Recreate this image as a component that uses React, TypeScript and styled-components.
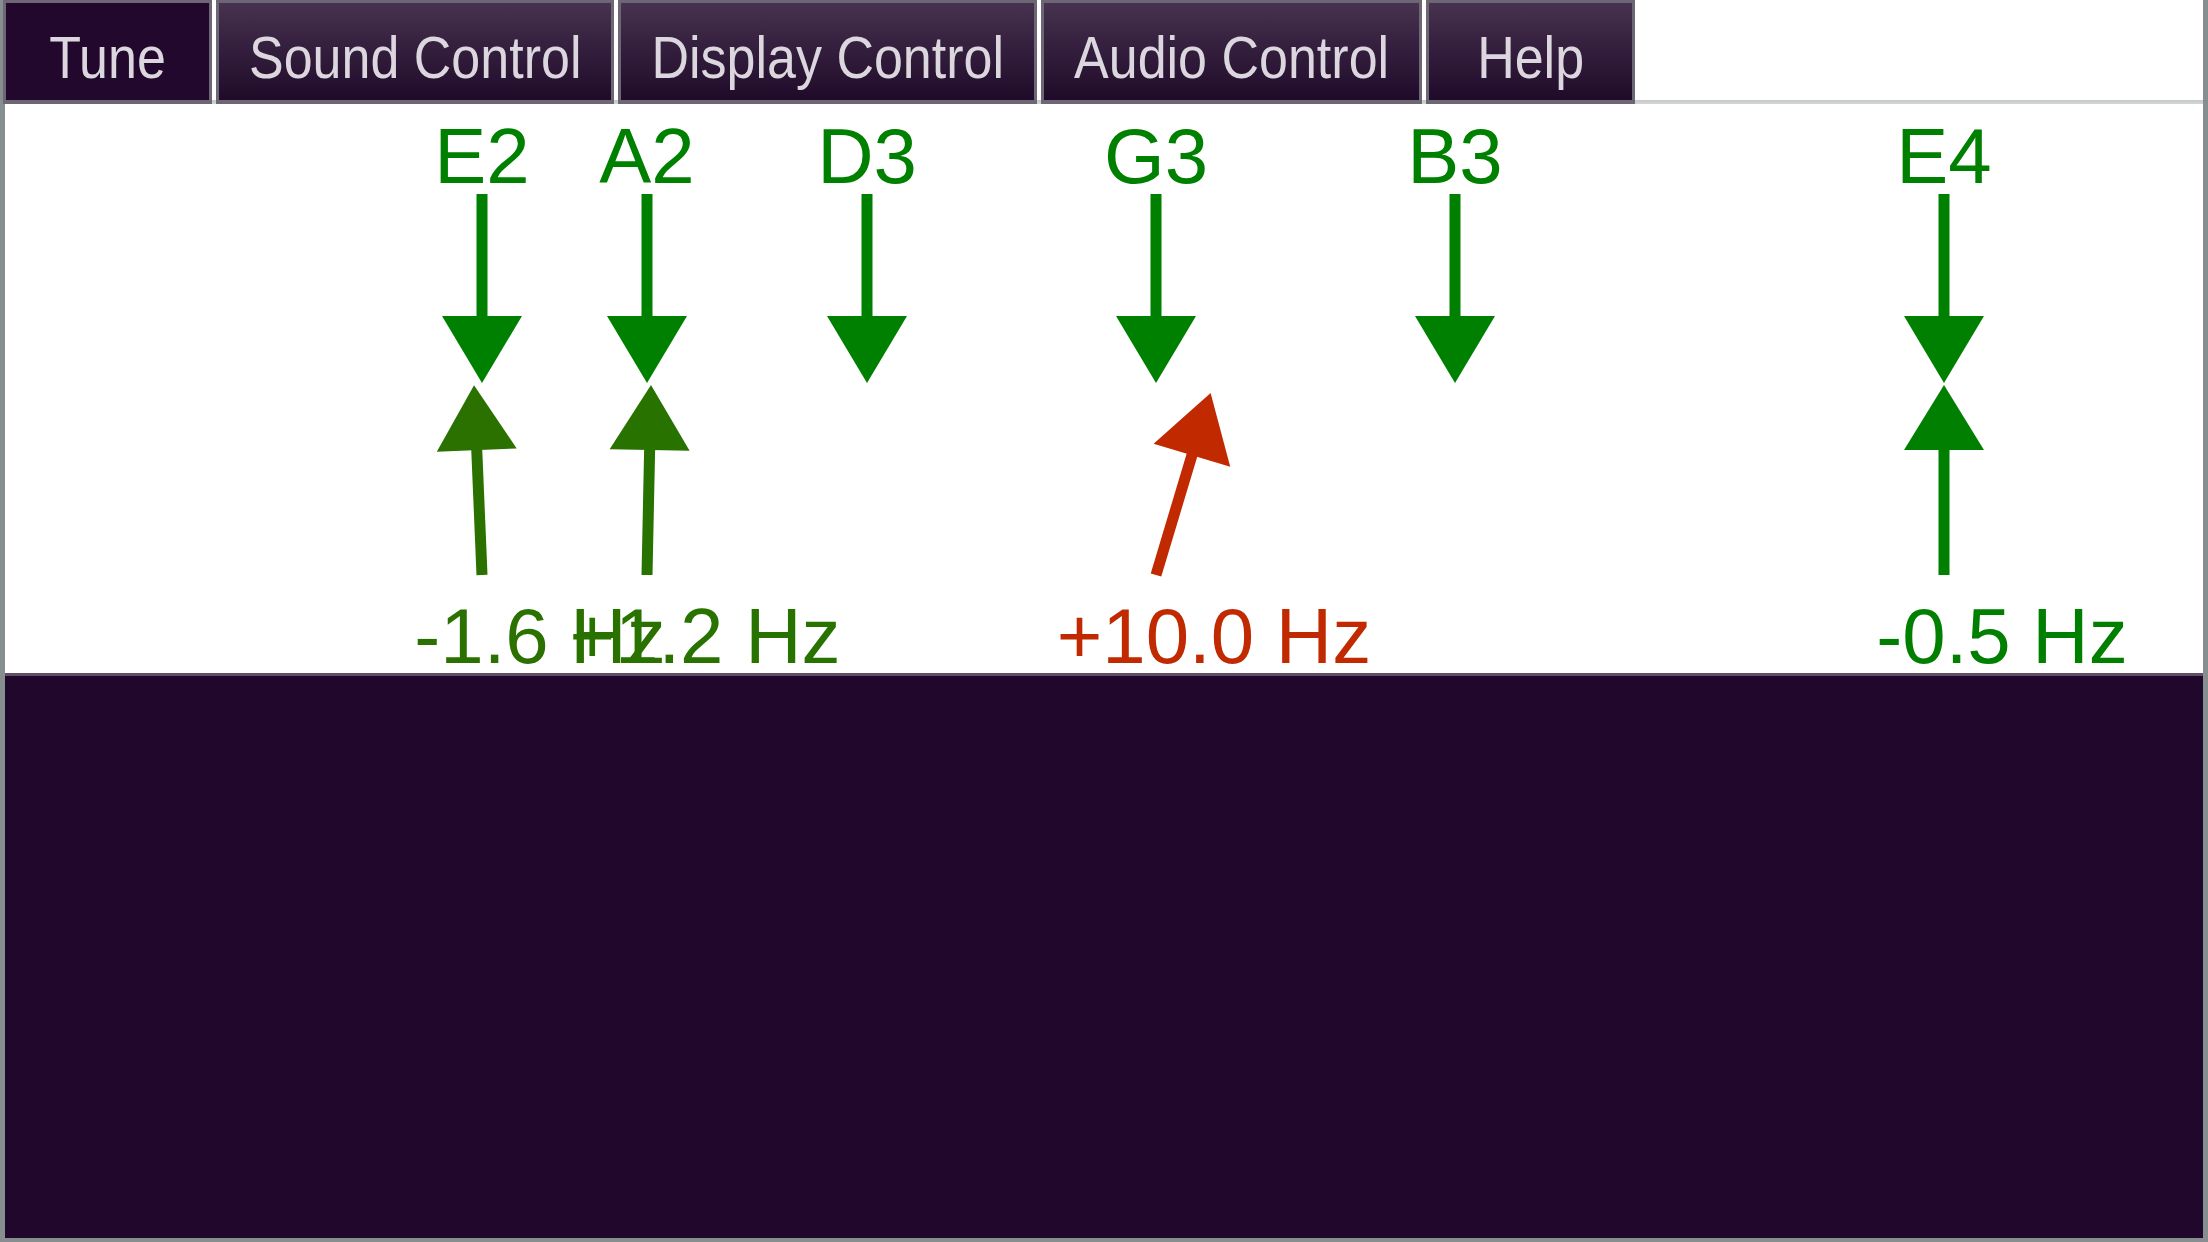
import React from "react";
import styled, { createGlobalStyle } from "styled-components";

const GlobalStyle = createGlobalStyle`
  html, body {
    margin: 0;
    padding: 0;
    background: #878e90;
    font-family: "Liberation Sans", Arial, sans-serif;
  }
  * { box-sizing: border-box; }
`;

const Page = styled.div`
  display: flex;
  flex-direction: column;
  width: 2208px;
  height: 1242px;
  padding: 0 5px 4px 5px;
  background: #878e90;
`;

const TabBar = styled.nav`
  display: flex;
  gap: 4px;
  height: 104px;
  margin-left: -2px;
  background: linear-gradient(to bottom, #ffffff 0, #ffffff 100px, #c3c8c9 100px, #d3d6d7 104px);
`;

const Tab = styled.div<{ $active?: boolean }>`
  display: flex;
  align-items: center;
  justify-content: center;
  height: 104px;
  min-width: 209px;
  padding: 12px 30px 0 30px;
  border: 3px solid #6d6775;
  border-bottom-width: 4px;
  background: ${(p) =>
    p.$active
      ? "#22082c"
      : "linear-gradient(to bottom, #47324f 0%, #34203e 45%, #200a29 100%)"};
`;

const TabLabel = styled.span`
  display: inline-block;
  font-family: "Liberation Sans", Arial, sans-serif;
  font-size: 52px;
  line-height: 1;
  color: #dcd6df;
  transform: scaleY(1.13);
  white-space: nowrap;
`;

const Tuner = styled.section`
  height: 572px;
  background: #ffffff;
  border-bottom: 3px solid #5f5066;
`;

const TunerCanvas = styled.svg`
  display: block;
  width: 2198px;
  height: 569px;
`;

const NoteText = styled.text`
  font-family: "Liberation Sans", Arial, sans-serif;
  font-size: 78px;
`;

const DarkPanel = styled.section`
  flex: 1;
  background: #21072b;
`;

type Reading = { angle: number; color: string; label: string };
type GuitarString = { note: string; x: number; up?: Reading };

const GREEN = "#008000";

const strings: GuitarString[] = [
  { note: "E2", x: 482, up: { angle: -2.4, color: "#2b7100", label: "-1.6 Hz" } },
  { note: "A2", x: 647, up: { angle: 1.2, color: "#287200", label: "+1.2 Hz" } },
  { note: "D3", x: 867 },
  { note: "G3", x: 1156, up: { angle: 16.7, color: "#c12900", label: "+10.0 Hz" } },
  { note: "B3", x: 1455 },
  { note: "E4", x: 1944, up: { angle: 0, color: "#007f00", label: "-0.5 Hz" } },
];

const tabs = ["Tune", "Sound Control", "Display Control", "Audio Control", "Help"];

function DownArrow({ x }: { x: number }) {
  return (
    <g fill={GREEN}>
      <rect x={x - 5.5} y={194} width={11} height={124} />
      <polygon points={`${x - 40},316 ${x + 40},316 ${x},383`} />
    </g>
  );
}

function UpArrow({ x, r }: { x: number; r: Reading }) {
  return (
    <g transform={`translate(${x} 575) rotate(${r.angle})`} fill={r.color}>
      <rect x={-5.5} y={-127} width={11} height={127} />
      <polygon points="-40,-125 40,-125 0,-190" />
    </g>
  );
}

export default function App() {
  return (
    <>
      <GlobalStyle />
      <Page>
        <TabBar>
          {tabs.map((t, i) => (
            <Tab key={t} $active={i === 0}>
              <TabLabel>{t}</TabLabel>
            </Tab>
          ))}
        </TabBar>
        <Tuner>
          <TunerCanvas viewBox="5 104 2198 569">
            {strings.map((s) => (
              <g key={s.note}>
                <NoteText x={s.x} y={183} textAnchor="middle" fill={GREEN}>
                  {s.note}
                </NoteText>
                <DownArrow x={s.x} />
                {s.up && <UpArrow x={s.x} r={s.up} />}
              </g>
            ))}
            {strings.map((s) =>
              s.up ? (
                <NoteText
                  key={s.note + "-hz"}
                  x={s.x + 58}
                  y={663}
                  textAnchor="middle"
                  fill={s.up.color}
                >
                  {s.up.label}
                </NoteText>
              ) : null
            )}
          </TunerCanvas>
        </Tuner>
        <DarkPanel />
      </Page>
    </>
  );
}
